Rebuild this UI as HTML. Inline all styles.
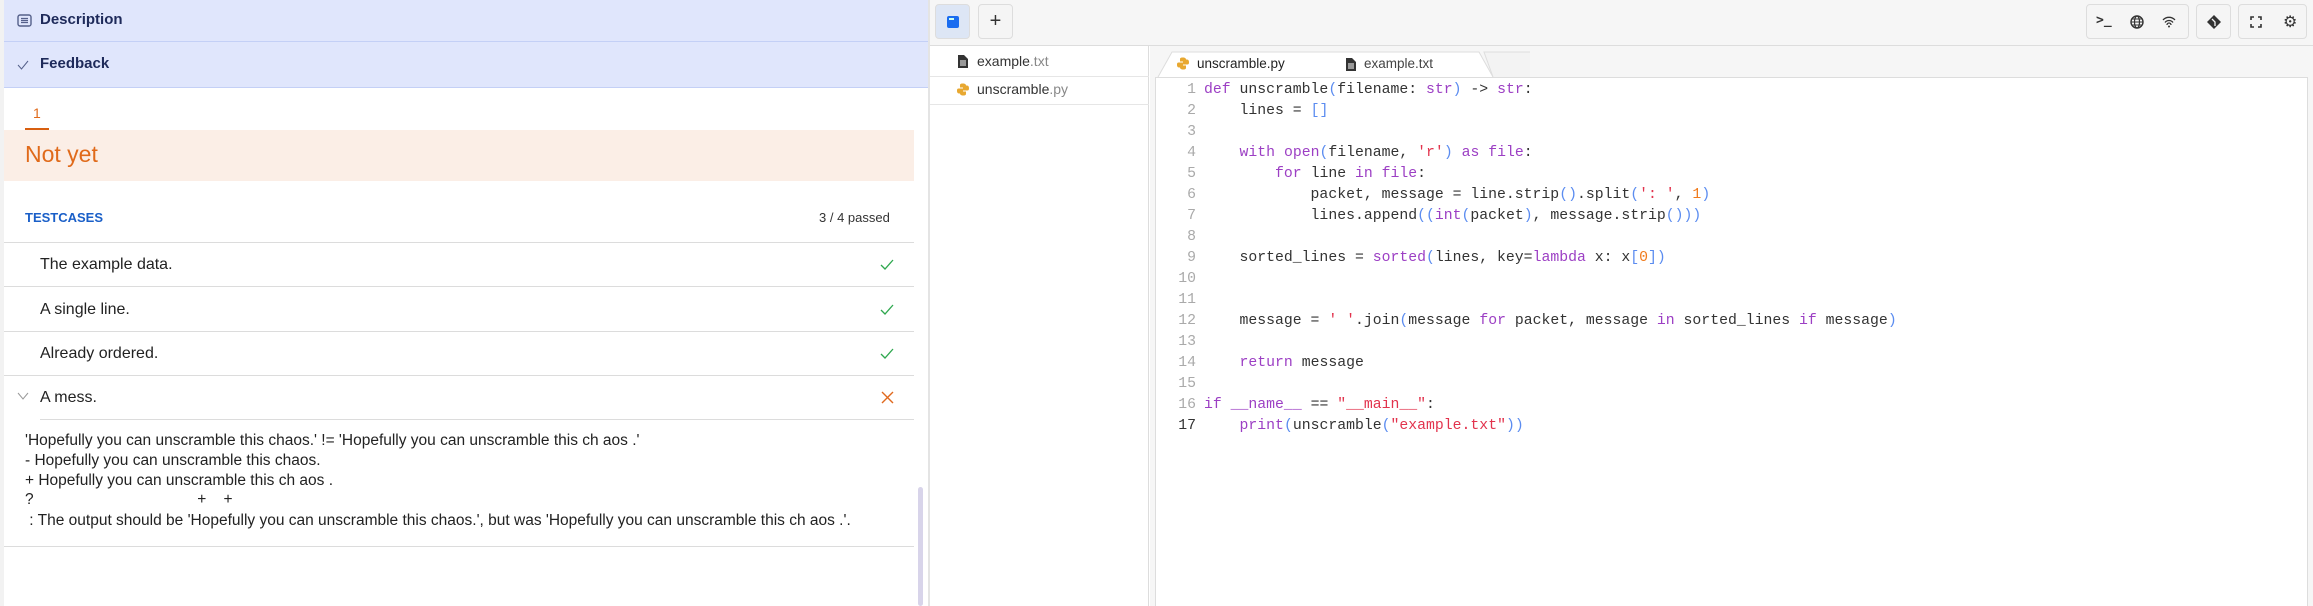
<!DOCTYPE html>
<html><head><meta charset="utf-8"><style>
*{margin:0;padding:0;box-sizing:border-box}
body{width:2313px;height:606px;overflow:hidden;background:#fff;font-family:"Liberation Sans",sans-serif;position:relative}
.a{position:absolute}
.bar{left:4px;width:926px;background:#e0e6fc;color:#1e2a5a;font-size:15px;font-weight:bold}
.row{left:4px;width:910px;height:44px;border-bottom:1px solid #dcdcdc;font-size:16px;color:#222}
.row span{position:absolute;left:36px;top:13px}
.ok{position:absolute;left:876px;top:16px}
.err{left:25px;font-size:15.5px;color:#222;white-space:pre}
.code{font-family:"Liberation Mono","DejaVu Sans Mono",monospace;font-size:14.8px;white-space:pre;color:#333}
.ln{left:1160px;width:36px;text-align:right;color:#aaa}
.k{color:#9c3fc4}.b{color:#5b8cf0}.s{color:#e2334d}.n{color:#f07b1d}
.btn{border:1px solid #ddd;border-radius:4px;background:#f5f5f5}
</style></head><body>
<div class="a" style="left:0;top:0;width:4px;height:606px;background:#f2f2f2"></div>
<div class="a bar" style="top:0;height:42px;border-bottom:1px solid #c4d0f6">
<svg class="a" style="left:13px;top:14px" width="15" height="13" viewBox="0 0 15 13"><rect x="1" y="1" width="13" height="11" rx="2" fill="none" stroke="#55608a" stroke-width="1.4"/><path d="M4 4.5h7M4 6.5h7M4 8.5h7" stroke="#55608a" stroke-width="1.2"/></svg>
<span class="a" style="left:36px;top:11px">Description</span></div>
<div class="a bar" style="top:42px;height:46px;border-bottom:1px solid #c4d0f6">
<svg class="a" style="left:13px;top:18px" width="12" height="10" viewBox="0 0 12 10"><path d="M1 5l3.5 4L11 1" fill="none" stroke="#55608a" stroke-width="1"/></svg>
<span class="a" style="left:36px;top:13px">Feedback</span></div>
<div class="a" style="left:33px;top:105px;color:#e06a1a;font-size:14px">1</div>
<div class="a" style="left:25px;top:128px;width:24px;height:2px;background:#d85f10"></div>
<div class="a" style="left:4px;top:130px;width:910px;height:51px;background:#fbeee6"></div>
<div class="a" style="left:25px;top:141px;color:#e06a1a;font-size:23px">Not yet</div>
<div class="a" style="left:25px;top:210px;color:#1a5fc8;font-size:13px;font-weight:bold">TESTCASES</div>
<div class="a" style="left:819px;top:210px;color:#333;font-size:13px">3 / 4 passed</div>
<div class="a" style="left:4px;top:242px;width:910px;border-top:1px solid #dcdcdc"></div>
<div class="a row" style="top:243px"><span>The example data.</span><svg class="ok" width="14" height="11"><path d="M1 6l4 4 8-9" fill="none" stroke="#2fa84f" stroke-width="1.3"/></svg></div>
<div class="a row" style="top:288px"><span>A single line.</span><svg class="ok" width="14" height="11"><path d="M1 6l4 4 8-9" fill="none" stroke="#2fa84f" stroke-width="1.3"/></svg></div>
<div class="a row" style="top:332px"><span>Already ordered.</span><svg class="ok" width="14" height="11"><path d="M1 6l4 4 8-9" fill="none" stroke="#2fa84f" stroke-width="1.3"/></svg></div>
<div class="a row" style="top:376px;border:none"><svg class="a" style="left:13px;top:16px" width="12" height="8"><path d="M1 1l5 6 5-6" fill="none" stroke="#999"/></svg><span>A mess.</span><svg class="ok" style="top:15px;left:877px" width="13" height="13"><path d="M1 1l11 11M12 1L1 12" stroke="#e0691e" stroke-width="1.4"/></svg></div>
<div class="a" style="left:40px;top:419px;width:874px;border-top:1px solid #dcdcdc"></div>
<div class="a err" style="top:432px">'Hopefully you can unscramble this chaos.' != 'Hopefully you can unscramble this ch aos .'</div>
<div class="a err" style="top:452px">- Hopefully you can unscramble this chaos.</div>
<div class="a err" style="top:472px">+ Hopefully you can unscramble this ch aos .</div>
<div class="a err" style="top:491px">?                                      +    +</div>
<div class="a err" style="top:512px"> : The output should be 'Hopefully you can unscramble this chaos.', but was 'Hopefully you can unscramble this ch aos .'.</div>
<div class="a" style="left:4px;top:546px;width:910px;border-top:1px solid #dcdcdc"></div>
<div class="a" style="left:918px;top:487px;width:5px;height:119px;background:#d8d4ea;border-radius:3px"></div>
<div class="a" style="left:928px;top:0;width:2px;height:606px;background:#e4e4e4"></div>
<div class="a" style="left:930px;top:0;width:1383px;height:46px;background:#f6f6f6;border-bottom:1px solid #ddd"></div>
<div class="a btn" style="left:935px;top:4px;width:35px;height:35px;background:#dde6f5"><div class="a" style="left:11px;top:11px;width:12px;height:12px;background:#1a6cf0;border-radius:2px"></div><div class="a" style="left:13px;top:13px;width:5px;height:2px;background:#cfe"></div></div>
<div class="a btn" style="left:978px;top:4px;width:35px;height:35px;text-align:center;font-size:20px;line-height:32px;color:#333">+</div>
<div class="a btn" style="left:2086px;top:4px;width:103px;height:35px;color:#333;font-size:13px">
<span class="a" style="left:9px;top:8px;font-family:'DejaVu Sans Mono',monospace;font-weight:bold">&gt;_</span>
<svg class="a" style="left:43px;top:10px" width="14" height="14" viewBox="0 0 14 14"><circle cx="7" cy="7" r="6" fill="none" stroke="#333" stroke-width="1.4"/><ellipse cx="7" cy="7" rx="2.5" ry="6" fill="none" stroke="#333" stroke-width="1.2"/><path d="M1 7h12M2 4h10M2 10h10" stroke="#333" stroke-width="1"/></svg>
<svg class="a" style="left:75px;top:10px" width="14" height="13" viewBox="0 0 14 13"><path d="M1 5a8 8 0 0 1 12 0M3 7.5a5 5 0 0 1 8 0M5 10a2 2 0 0 1 4 0" fill="none" stroke="#333" stroke-width="1.3"/><circle cx="7" cy="11.5" r="1" fill="#333"/></svg></div>
<div class="a btn" style="left:2196px;top:4px;width:35px;height:35px"><svg class="a" style="left:10px;top:10px" width="14" height="14" viewBox="0 0 14 14"><path d="M7 0L14 7 7 14 0 7z" fill="#333"/><path d="M5 4l3 3v4" stroke="#f5f5f5" stroke-width="1.3" fill="none"/></svg></div>
<div class="a btn" style="left:2238px;top:4px;width:69px;height:35px"><svg class="a" style="left:11px;top:11px" width="12" height="12" viewBox="0 0 12 12"><path d="M1 4V1h3M8 1h3v3M11 8v3H8M4 11H1V8" fill="none" stroke="#333" stroke-width="1.6"/></svg>
<span class="a" style="left:44px;top:7px;font-size:16px;color:#333">⚙</span></div>
<div class="a" style="left:930px;top:46px;width:219px;height:560px;background:#fff;border-right:1px solid #ddd"></div>
<div class="a" style="left:930px;top:76px;width:219px;border-top:1px solid #e6e6e6"></div>
<div class="a" style="left:930px;top:104px;width:219px;border-top:1px solid #e6e6e6"></div>
<svg class="a" style="left:958px;top:55px" width="10" height="13" viewBox="0 0 10 13"><path d="M0 0h6l4 4v9H0z" fill="#333"/><path d="M2 6h6M2 8h6M2 10h6" stroke="#fff"/></svg>
<div class="a" style="left:977px;top:53px;font-size:14px;color:#333">example<span style="color:#888">.txt</span></div>
<svg class="a" style="left:957px;top:83px" width="12" height="13" viewBox="0 0 12 12"><path d="M6 0C3 0 3 1 3 2v2h3v1H1.5C0 5 0 6.5 0 7.5S0.5 10 2 10h1V8c0-1 1-2 2-2h3c1 0 1-1 1-1V2c0-1-1-2-3-2z" fill="#e8a830"/><path d="M6 12c3 0 3-1 3-2V8H6V7h4.5c1.5 0 1.5-1.5 1.5-2.5S11.5 2 10 2H9v2c0 1-1 2-2 2H4c-1 0-1 1-1 1v3c0 1 1 2 3 2z" fill="#e8a830"/></svg>
<div class="a" style="left:977px;top:81px;font-size:14px;color:#333">unscramble<span style="color:#888">.py</span></div>
<div class="a" style="left:1150px;top:46px;width:1163px;height:560px;background:#f6f6f6"></div>
<svg class="a" style="left:1150px;top:50px" width="380" height="28"><path d="M8 27L22 2H329L343 27" fill="#fff" stroke="#ddd"/><path d="M343 27L334 2H500L510 27" fill="#f3f3f3" stroke="#ddd"/></svg>
<div class="a" style="left:1155px;top:77px;width:1153px;height:529px;background:#fff;border:1px solid #ddd;border-bottom:none"></div>
<svg class="a" style="left:1177px;top:57px" width="12" height="13" viewBox="0 0 12 12"><path d="M6 0C3 0 3 1 3 2v2h3v1H1.5C0 5 0 6.5 0 7.5S0.5 10 2 10h1V8c0-1 1-2 2-2h3c1 0 1-1 1-1V2c0-1-1-2-3-2z" fill="#e8a830"/><path d="M6 12c3 0 3-1 3-2V8H6V7h4.5c1.5 0 1.5-1.5 1.5-2.5S11.5 2 10 2H9v2c0 1-1 2-2 2H4c-1 0-1 1-1 1v3c0 1 1 2 3 2z" fill="#e8a830"/></svg>
<div class="a" style="left:1197px;top:56px;font-size:13.5px;color:#222">unscramble.py</div>
<svg class="a" style="left:1346px;top:58px" width="10" height="13" viewBox="0 0 10 13"><path d="M0 0h6l4 4v9H0z" fill="#333"/><path d="M2 6h6M2 8h6M2 10h6" stroke="#fff"/></svg>
<div class="a" style="left:1364px;top:56px;font-size:13.5px;color:#444">example.txt</div>
<div class="a code ln" style="top:80px;line-height:21px">1
2
3
4
5
6
7
8
9
10
11
12
13
14
15
16
<span style="color:#333">17</span></div>
<div class="a code" style="left:1204px;top:80px;line-height:21px"><span class="k">def</span> unscramble<span class="b">(</span>filename: <span class="k">str</span><span class="b">)</span> -&gt; <span class="k">str</span>:
    lines = <span class="b">[]</span>

    <span class="k">with</span> <span class="k">open</span><span class="b">(</span>filename, <span class="s">'r'</span><span class="b">)</span> <span class="k">as</span> <span class="k">file</span>:
        <span class="k">for</span> line <span class="k">in</span> <span class="k">file</span>:
            packet, message = line.strip<span class="b">()</span>.split<span class="b">(</span><span class="s">': '</span>, <span class="n">1</span><span class="b">)</span>
            lines.append<span class="b">((</span><span class="k">int</span><span class="b">(</span>packet<span class="b">)</span>, message.strip<span class="b">()))</span>

    sorted_lines = <span class="k">sorted</span><span class="b">(</span>lines, key=<span class="k">lambda</span> x: x<span class="b">[</span><span class="n">0</span><span class="b">])</span>


    message = <span class="s">' '</span>.join<span class="b">(</span>message <span class="k">for</span> packet, message <span class="k">in</span> sorted_lines <span class="k">if</span> message<span class="b">)</span>

    <span class="k">return</span> message

<span class="k">if</span> <span class="k">__name__</span> == <span class="s">"__main__"</span>:
    <span class="k">print</span><span class="b">(</span>unscramble<span class="b">(</span><span class="s">"example.txt"</span><span class="b">))</span></div>
</body></html>
